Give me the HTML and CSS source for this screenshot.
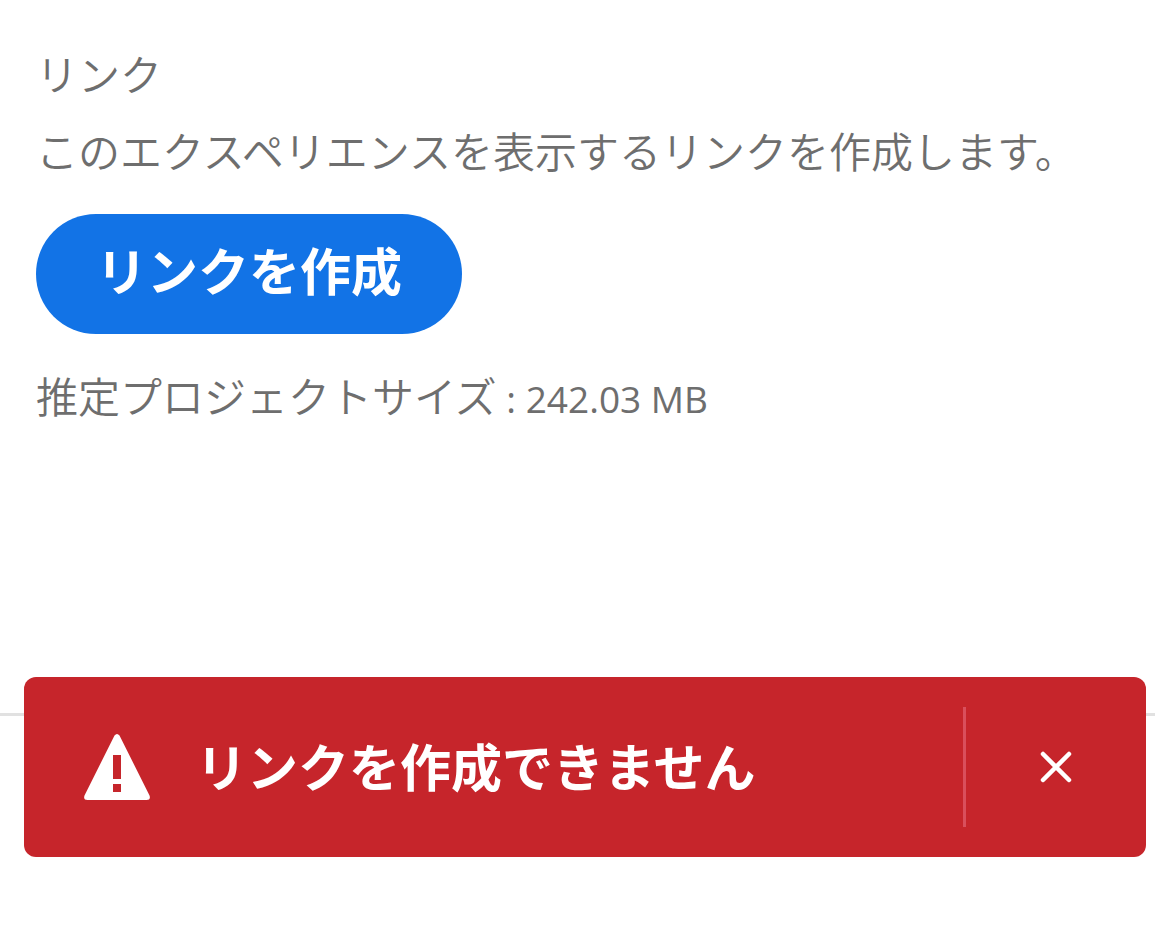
FILE: index.html
```html
<!DOCTYPE html>
<html lang="ja">
<head>
<meta charset="utf-8">
<meta name="viewport" content="width=device-width, initial-scale=1">
<title>リンク</title>
<link rel="stylesheet" href="styles.css">
</head>
<body>
<main class="panel">
  <h1 class="title">リンク</h1>
  <p class="description">このエクスペリエンスを表示するリンクを作成します。</p>
  <button class="create" type="button">リンクを作成</button>
  <p class="size">推定プロジェクトサイズ<span class="amount"> : 242.03 MB</span></p>
</main>
<footer class="footer">
  <div class="toast" role="alert">
    <svg class="alert-icon" viewBox="0 0 66 66" aria-hidden="true">
      <path fill="#fff" fill-rule="evenodd" d="M30.5 1.500Q33-1.500 35.500 1.500L65.500 61.500Q67 66 62.500 66H3.500Q-1 66 .5 61.500ZM29 21V45H37V21ZM29 50V58H37V50Z"/>
    </svg>
    <span class="message">リンクを作成できません</span>
    <button class="close" type="button" aria-label="閉じる">
      <svg class="close-icon" viewBox="0 0 32 32" aria-hidden="true">
        <path d="M3 3L29 29M29 3L3 29" fill="none" stroke="#fff" stroke-width="4.500" stroke-linecap="round"/>
      </svg>
    </button>
  </div>
</footer>
</body>
</html>
```
FILE: styles.css
```css
* {
  box-sizing: border-box;
}

body {
  margin: 0;
  background: #fff;
  color: #6e6e6e;
  font-family: "Noto Sans CJK JP", sans-serif;
  font-size: 42px;
  line-height: 60px;
}

.panel {
  display: flex;
  flex-direction: column;
  align-items: flex-start;
  padding: 43px 36px 0;
}

.title,
.description,
.size {
  margin: 0;
  font-size: 42px;
  font-weight: 350;
}

.description {
  margin-top: 17px;
}

.create {
  height: 120px;
  margin-top: 34px;
  padding: 0 60px 10px;
  border: 0;
  border-radius: 60px;
  background: #1273e6;
  color: #fff;
  font: inherit;
  font-size: 51px;
  font-weight: 700;
}

.size {
  margin-top: 31px;
}

.amount {
  font-family: "Open Sans", sans-serif;
  font-size: 37px;
  font-weight: 400;
}

.footer {
  margin-top: 248px;
  padding: 0 9px 0 24px;
  background: linear-gradient(#e1e1e1, #e1e1e1) 0 36px / 100% 3px no-repeat;
}

.toast {
  display: flex;
  align-items: center;
  height: 180px;
  padding-left: 60px;
  border-radius: 12px;
  background: #c6252b;
  color: #fff;
}

.alert-icon {
  flex: none;
  width: 66px;
  height: 66px;
}

.message {
  flex: 1;
  margin-left: 46px;
  padding-bottom: 4px;
  font-size: 51px;
  font-weight: 700;
}

.close {
  display: flex;
  align-items: center;
  justify-content: center;
  width: 183px;
  height: 120px;
  padding: 0;
  border: 0;
  border-left: 3px solid #d94f5c;
  background: transparent;
}

.close-icon {
  width: 32px;
  height: 32px;
}
```
